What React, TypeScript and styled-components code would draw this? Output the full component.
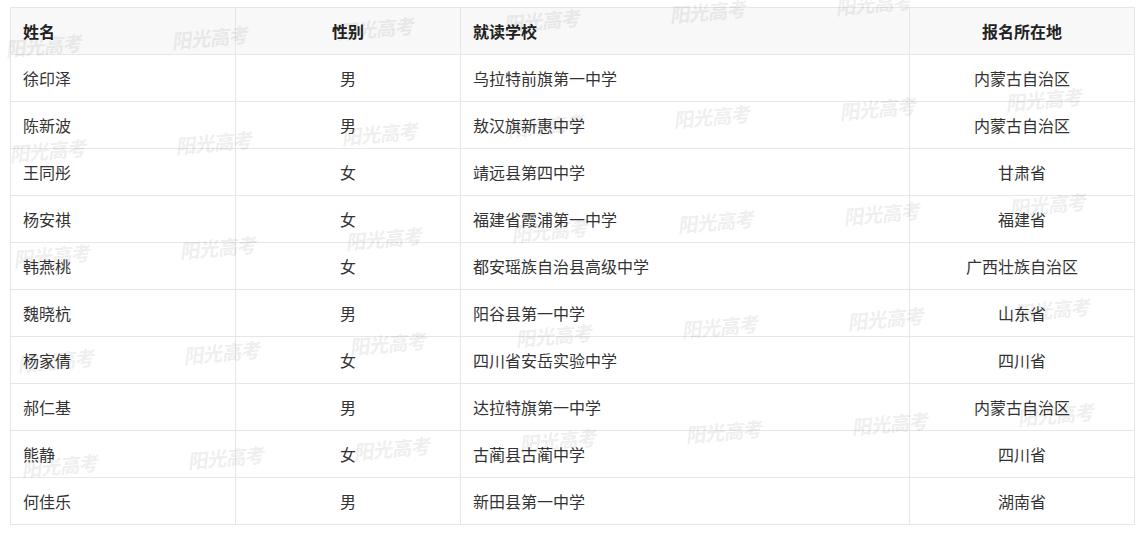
import React from "react";
import styled, { createGlobalStyle } from "styled-components";

const GlobalStyle = createGlobalStyle`
  html, body { margin: 0; padding: 0; background: #fff; }
  body { font-family: "Noto Sans CJK SC", "Noto Sans", sans-serif; }
`;

const Page = styled.div`
  position: relative;
  width: 1146px;
  height: 533px;
  padding: 7px 12px 0 10px;
  box-sizing: border-box;
  overflow: hidden;
`;

const Table = styled.table`
  width: 1124px;
  border-collapse: collapse;
  table-layout: fixed;
  font-size: 16px;
  color: #333;
`;

const HeadCell = styled.th<{ $center?: boolean }>`
  height: 47px;
  padding: 0 12px;
  background: #f8f8f8;
  border: 1px solid #e6e6e6;
  font-weight: bold;
  color: #222;
  text-align: ${(p) => (p.$center ? "center" : "left")};
  box-sizing: border-box;
`;

const Cell = styled.td<{ $center?: boolean }>`
  height: 47px;
  padding: 0 12px;
  border: 1px solid #e6e6e6;
  text-align: ${(p) => (p.$center ? "center" : "left")};
  box-sizing: border-box;
`;

const Watermarks = styled.div`
  position: absolute;
  inset: 0;
  pointer-events: none;
`;

const Mark = styled.span`
  position: absolute;
  font-family: "Noto Sans CJK SC", sans-serif;
  font-weight: 900;
  font-size: 20px;
  letter-spacing: -1px;
  color: rgba(0, 0, 0, 0.065);
  white-space: nowrap;
  transform: translate(-50%, -50%) rotate(-5deg) skewX(-12deg);
`;

const rows: [string, string, string, string][] = [
  ["徐印泽", "男", "乌拉特前旗第一中学", "内蒙古自治区"],
  ["陈新波", "男", "敖汉旗新惠中学", "内蒙古自治区"],
  ["王同彤", "女", "靖远县第四中学", "甘肃省"],
  ["杨安祺", "女", "福建省霞浦第一中学", "福建省"],
  ["韩燕桃", "女", "都安瑶族自治县高级中学", "广西壮族自治区"],
  ["魏晓杭", "男", "阳谷县第一中学", "山东省"],
  ["杨家倩", "女", "四川省安岳实验中学", "四川省"],
  ["郝仁基", "男", "达拉特旗第一中学", "内蒙古自治区"],
  ["熊静", "女", "古蔺县古蔺中学", "四川省"],
  ["何佳乐", "男", "新田县第一中学", "湖南省"],
];

const marks: { x: number; y: number }[] = [];
for (let j = 0; j < 5; j++) {
  for (let i = 0; i < 7; i++) {
    const y = 45 + 105 * j - 8.5 * i;
    if (y < 0) continue;
    marks.push({ x: 45 + 166 * i + 4 * j, y });
  }
}

export default function App() {
  return (
    <>
      <GlobalStyle />
      <Page>
        <Table>
          <colgroup>
            <col style={{ width: 225 }} />
            <col style={{ width: 225 }} />
            <col style={{ width: 449 }} />
            <col style={{ width: 225 }} />
          </colgroup>
          <thead>
            <tr>
              <HeadCell>姓名</HeadCell>
              <HeadCell $center>性别</HeadCell>
              <HeadCell>就读学校</HeadCell>
              <HeadCell $center>报名所在地</HeadCell>
            </tr>
          </thead>
          <tbody>
            {rows.map((r) => (
              <tr key={r[0]}>
                <Cell>{r[0]}</Cell>
                <Cell $center>{r[1]}</Cell>
                <Cell>{r[2]}</Cell>
                <Cell $center>{r[3]}</Cell>
              </tr>
            ))}
          </tbody>
        </Table>
        <Watermarks>
          {marks.map((m, k) => (
            <Mark key={k} style={{ left: m.x, top: m.y }}>
              阳光高考
            </Mark>
          ))}
        </Watermarks>
      </Page>
    </>
  );
}
